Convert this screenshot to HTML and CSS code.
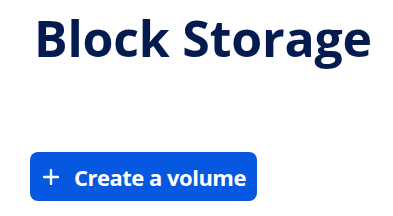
FILE: index.html
```html
<!DOCTYPE html>
<html lang="en">
<head>
  <meta charset="UTF-8" />
  <meta name="viewport" content="width=device-width, initial-scale=1.0" />
  <title>Block Storage</title>
  <link rel="stylesheet" href="styles.css">
</head>
<body>
  <div class="page">
    <h1 class="title">Block Storage</h1>
    <button class="create-btn" type="button">
      <svg class="plus" width="16" height="16" viewBox="0 0 16 16" aria-hidden="true">
        <path d="M8 1v14M1 8h14" stroke="#fff" stroke-width="2.4" stroke-linecap="round" fill="none" />
      </svg>
      <span>Create a volume</span>
    </button>
  </div>
</body>
</html>
```
FILE: styles.css
```css
* {
  box-sizing: border-box;
  margin: 0;
  padding: 0;
}
body {
  background: #fff;
  font-family: 'Open Sans', sans-serif;
}
.page {
  padding: 8px 0 0 30px;
  display: flex;
  flex-direction: column;
  align-items: flex-start;
}
.title {
  font-size: 50px;
  line-height: 60px;
  font-weight: 700;
  color: #031b4e;
  margin-left: 4px;
  margin-bottom: 84px;
  letter-spacing: -0.2px;
}
.create-btn {
  display: flex;
  align-items: center;
  gap: 15px;
  height: 49px;
  padding: 0 11px 0 13px;
  background: #0658e0;
  color: #fff;
  border: none;
  border-radius: 8px;
  font-family: 'Open Sans', sans-serif;
  font-size: 22px;
  font-weight: 700;
  letter-spacing: -0.5px;
  cursor: pointer;
}
.plus {
  display: block;
  flex-shrink: 0;
}
```
